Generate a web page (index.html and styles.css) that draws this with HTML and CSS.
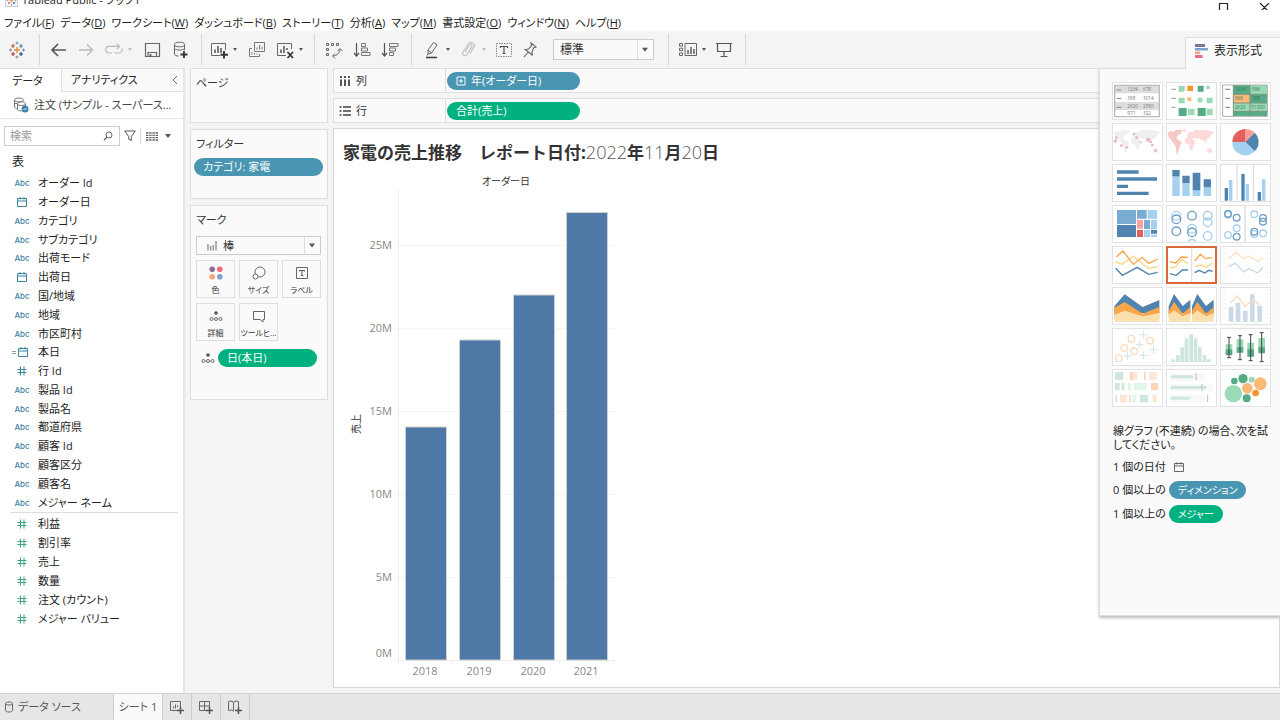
FILE: index.html
```html
<!DOCTYPE html>
<html lang="ja">
<head>
<meta charset="utf-8">
<title>Tableau Public - ブック1</title>
<link rel="stylesheet" href="styles.css">
</head>
<body>
<svg class="defs" aria-hidden="true">
  <symbol id="cal" viewBox="0 0 12 12"><path d="M1.500 2.500h9v8h-9zM1.500 5h9M4 1v2.500M8 1v2.500" fill="none" stroke="currentColor"/></symbol>
  <symbol id="hash" viewBox="0 0 12 12"><path d="M4.500 1.500v9M8 1.500v9M1.500 4.500h9M1.500 7.500h9" fill="none" stroke="currentColor"/></symbol>
  <symbol id="logo" viewBox="0 0 18 18"><path d="M9 6v6M6 9h6" stroke="#eb8a35" stroke-width="1.400"/><path d="M5 3v4M3 5h4" stroke="#c7504d" stroke-width="1.200"/><path d="M13 3v4M11 5h4" stroke="#5b879b" stroke-width="1.200"/><path d="M5 11v4M3 13h4" stroke="#c7353f" stroke-width="1.200"/><path d="M13 11v4M11 13h4" stroke="#1f447e" stroke-width="1.200"/><path d="M9 .5v3M7.500 2h3M9 14.500v3M7.500 16h3M1 9h3M2.500 7.500v3M14 9h3M15.500 7.500v3" stroke="#6f8fb3"/></symbol>
  <symbol id="detail" viewBox="0 0 14 12"><circle cx="7" cy="3" r="1.800" fill="#555"/><g fill="none" stroke="#666"><circle cx="2.500" cy="9" r="1.500"/><circle cx="7" cy="9" r="1.500"/><circle cx="11.500" cy="9" r="1.500"/></g></symbol>
</svg>

<header class="titlebar">
  <svg class="app-icon" viewBox="0 0 18 18"><use href="#logo"/></svg>
  <span class="app-title">Tableau Public - ブック1</span>
  <svg class="winctl" viewBox="0 0 60 12"><path d="M4.500 0.500h8v8h-8zM45 0l9 9M54 0l-9 9" fill="none" stroke="#222" stroke-width="1.200"/></svg>
</header>

<nav class="menubar">
  <button>ファイル(<u>F</u>)</button><button>データ(<u>D</u>)</button><button>ワークシート(<u>W</u>)</button><button>ダッシュボード(<u>B</u>)</button><button>ストーリー(<u>T</u>)</button><button>分析(<u>A</u>)</button><button>マップ(<u>M</u>)</button><button>書式設定(<u>O</u>)</button><button>ウィンドウ(<u>N</u>)</button><button>ヘルプ(<u>H</u>)</button>
</nav>

<div class="toolbar">
  <div class="group g-logo"><button class="ib" aria-label="スタート"><svg viewBox="0 0 18 18"><use href="#logo"/></svg></button></div>
  <div class="group g-nav">
    <button class="ib" aria-label="元に戻す"><svg viewBox="0 0 18 18"><path d="M17 9H3M9 3L3 9l6 6" fill="none" stroke="#555" stroke-width="1.600"/></svg></button>
    <button class="ib" aria-label="やり直し"><svg viewBox="0 0 18 18"><path d="M2 9h14M10 3.500L15.500 9 10 14.500" fill="none" stroke="#bbb" stroke-width="1.400"/></svg></button>
    <span class="split"><button class="ib" aria-label="再生"><svg viewBox="0 0 18 18"><path d="M7 12H4a3.300 3.300 0 010-6.600h10M12 3l2.500 2.400L12 8M9 12h5a3.300 3.300 0 003-4.500" fill="none" stroke="#bbb" stroke-width="1.200"/></svg></button><button class="caret off" aria-label="再生オプション"></button></span>
    <button class="ib" aria-label="保存"><svg viewBox="0 0 18 18"><path d="M2.500 2.500h14v13h-14zM5 15.500v-4h8.500v4" fill="none" stroke="#666" stroke-width="1.200"/><path d="M6.500 13h2v2.500h-2z" fill="#666"/></svg></button>
    <button class="ib" aria-label="新しいデータ ソース"><svg viewBox="0 0 18 18"><path d="M3.500 4v9c0 1.500 2 2 4 2M13.500 4v5" fill="none" stroke="#666"/><ellipse cx="8.500" cy="3.500" rx="5" ry="2.300" fill="none" stroke="#666"/><path d="M3.500 7.500c1 2 9 2 10 0" fill="none" stroke="#666"/><path d="M13 10v7M9.500 13.500h7" stroke="#333" stroke-width="1.800"/></svg></button>
  </div>
  <div class="group g-sheet">
    <span class="split"><button class="ib" aria-label="新しいワークシート"><svg viewBox="0 0 18 18"><path d="M10 14.500H1.500v-12h14V9" fill="none" stroke="#666"/><path d="M5 12V8.500M8 12V5M11 12V7" stroke="#555" stroke-width="1.500"/><path d="M14 10v7.500M10.500 13.700h7.500" stroke="#333" stroke-width="1.900"/></svg></button><button class="caret" aria-label="新規オプション"></button></span>
    <button class="ib" aria-label="複製"><svg viewBox="0 0 18 18"><path d="M6.500 1.500h10v9h-10zM4 7.500H1.500v8h10V13" fill="none" stroke="#777"/><path d="M9 8.500V6.500M11.500 8.500V4M14 8.500V5.500M4 13.500V11M6.500 13.500V12M9 13.500V12.500" stroke="#777"/></svg></button>
    <span class="split"><button class="ib" aria-label="クリア"><svg viewBox="0 0 18 18"><path d="M10 14.500H1.500v-12h14V8" fill="none" stroke="#666"/><path d="M5 12V8.500M8 12V5M11 9V7" stroke="#555" stroke-width="1.500"/><path d="M11.500 11l5.500 6M17 11l-5.500 6" stroke="#333" stroke-width="1.700"/></svg></button><button class="caret" aria-label="クリア オプション"></button></span>
  </div>
  <div class="group g-sort">
    <button class="ib" aria-label="行と列の交換"><svg viewBox="0 0 18 18"><path d="M1.500 2.500h2v2h-2zM6.500 2.500h2v2h-2zM11.500 2.500h2v2h-2zM1.500 7.500h2v2h-2zM1.500 12.500h2v2h-2zM15 8c0 4-3 6.500-7 7M15 7.500l-2.500 2.500M15 7.500l2.500 2.500M7.500 15l2.500-2.500M7.500 15l2.500 2.500" fill="none" stroke="#666"/></svg></button>
    <button class="ib" aria-label="昇順"><svg viewBox="0 0 18 18"><path d="M3.500 2v13M1 12l2.500 3L6 12" fill="none" stroke="#555" stroke-width="1.200"/><path d="M8.500 2.500h4v3h-4zM8.500 7h6v3h-6zM8.500 11.500h8.500v3H8.500z" fill="none" stroke="#777"/></svg></button>
    <button class="ib" aria-label="降順"><svg viewBox="0 0 18 18"><path d="M3.500 2v13M1 12l2.500 3L6 12" fill="none" stroke="#555" stroke-width="1.200"/><path d="M8.500 2.500H17v3H8.500zM8.500 7h6v3h-6zM8.500 11.500h4v3h-4z" fill="none" stroke="#777"/></svg></button>
  </div>
  <div class="group g-format">
    <span class="split"><button class="ib" aria-label="ハイライト"><svg viewBox="0 0 18 18"><path d="M5 9l5.500-7.500 3.500 2.500L8.500 12 5 13zM5 9l3.500 3M5 13l-1 1.500" fill="none" stroke="#666"/><path d="M3 16.500h11" stroke="#444" stroke-width="1.600"/></svg></button><button class="caret" aria-label="ハイライト オプション"></button></span>
    <span class="split"><button class="ib" aria-label="グループ"><svg viewBox="0 0 18 18"><path d="M6 11l4.500-6.500c1.500-2 3.500-.5 2.500 1.200L8 13.500c-1.800 2.500-5.500.5-4-2.500l5.500-8c2.500-3.500 7.500-.5 5.500 3L11 12.500" fill="none" stroke="#bbb" stroke-width="1.100"/></svg></button><button class="caret off" aria-label="グループ オプション"></button></span>
    <button class="ib" aria-label="マーク ラベル"><svg viewBox="0 0 18 18"><path d="M1.500 2.500h15v13h-15z" fill="none" stroke="#888" stroke-dasharray="1.500 1"/><path d="M5.500 7V5.500h7V7M9 5.500v7M7.500 12.500h3" fill="none" stroke="#555" stroke-width="1.200"/></svg></button>
    <button class="ib" aria-label="軸の固定"><svg viewBox="0 0 18 18"><path d="M10 2l5 4-2.200.8-1.800 4 .2 3.200-7-5.500 3.300-.5L10.500 4.500zM7 11.500L3 16" fill="none" stroke="#666" stroke-width="1.100"/></svg></button>
    <select class="fit" aria-label="ビューの調整"><option>標準</option></select>
  </div>
  <div class="group g-view">
    <span class="split"><button class="ib" aria-label="カードの表示"><svg viewBox="0 0 18 18"><path d="M.5 2.500h3v2.500h-3zM.5 7.200h3v2.500h-3zM.5 12h3v2.500h-3zM6 2.500h11.500v12H6z" fill="none" stroke="#666"/><path d="M9 13V9M12 13V6M15 13V8" stroke="#555" stroke-width="1.400"/></svg></button><button class="caret" aria-label="カード オプション"></button></span>
    <button class="ib" aria-label="プレゼンテーション"><svg viewBox="0 0 18 18"><path d="M1 2.500h16M2.500 2.500v8h13v-8M9 10.500V15M5.500 15.500h7" fill="none" stroke="#555" stroke-width="1.200"/></svg></button>
  </div>
  <button class="showme-tab"><svg viewBox="0 0 13 14"><path fill="#87709b" d="M0 0h10v3H0z"/><path fill="#7ba3cf" d="M0 4h13v2.500H0z"/><path fill="#f3a67d" d="M0 7.500h5V10H0z"/><path fill="#f06a7e" d="M0 11h7.500v3H0z"/></svg>表示形式</button>
</div>

<main class="work">
  <aside class="data-pane">
    <div class="pane-tabs"><button class="ptab active">データ</button><button class="ptab">アナリティクス<svg viewBox="0 0 6 10"><path d="M5 1L1 5l4 4" fill="none" stroke="#666"/></svg></button></div>
    <div class="source"><svg viewBox="0 0 16 16"><ellipse cx="6" cy="3" rx="4.500" ry="2" fill="none" stroke="#777"/><path d="M1.500 3v7c0 1 1.500 1.500 3 1.500M4.500 7c0-3 8-3 8 0v2M4.500 7v5c0 1.500 2 2 4 2M4.500 7c0 2 8 2 8 0M2 6.500h2" fill="none" stroke="#777"/><circle cx="12" cy="12" r="3.500" fill="#3b86a8"/><path d="M10.500 12l1 1 2-2" fill="none" stroke="#fff"/></svg><span>注文 (サンプル - スーパース…</span></div>
    <div class="search-row">
      <label class="search"><input type="text" placeholder="検索" aria-label="検索"><svg viewBox="0 0 10 10"><circle cx="6" cy="4" r="3" fill="none" stroke="#666"/><path d="M4 6L1 9" stroke="#666" stroke-width="1.200"/></svg></label>
      <button class="filter" aria-label="フィルター"><svg viewBox="0 0 12 12"><path d="M.7 1h10.600L7.300 6.500v4l-2.600-1.300V6.500z" fill="none" stroke="#555"/></svg></button>
      <button class="viewas" aria-label="表示方法"><svg viewBox="0 0 12 9"><path d="M0 1h12M0 3.300h12M0 5.600h12M0 8h12" stroke="#666" stroke-width="1.300" stroke-dasharray="2.400 .8"/></svg></button>
      <button class="caret" aria-label="オプション"></button>
    </div>
    <h2 class="table-head">表</h2>
    <ul class="fields dims">
      <li><i>Abc</i>オーダー Id</li>
      <li><i><svg><use href="#cal"/></svg></i>オーダー日</li>
      <li><i>Abc</i>カテゴリ</li>
      <li><i>Abc</i>サブカテゴリ</li>
      <li><i>Abc</i>出荷モード</li>
      <li><i><svg><use href="#cal"/></svg></i>出荷日</li>
      <li><i>Abc</i>国/地域</li>
      <li><i>Abc</i>地域</li>
      <li><i>Abc</i>市区町村</li>
      <li><i class="calc">=<svg><use href="#cal"/></svg></i>本日</li>
      <li><i><svg><use href="#hash"/></svg></i>行 Id</li>
      <li><i>Abc</i>製品 Id</li>
      <li><i>Abc</i>製品名</li>
      <li><i>Abc</i>都道府県</li>
      <li><i>Abc</i>顧客 Id</li>
      <li><i>Abc</i>顧客区分</li>
      <li><i>Abc</i>顧客名</li>
      <li><i>Abc</i><em>メジャー ネーム</em></li>
    </ul>
    <ul class="fields meas">
      <li><i><svg><use href="#hash"/></svg></i>利益</li>
      <li><i><svg><use href="#hash"/></svg></i>割引率</li>
      <li><i><svg><use href="#hash"/></svg></i>売上</li>
      <li><i><svg><use href="#hash"/></svg></i>数量</li>
      <li><i><svg><use href="#hash"/></svg></i><em>注文 (カウント)</em></li>
      <li><i><svg><use href="#hash"/></svg></i><em>メジャー バリュー</em></li>
    </ul>
  </aside>

  <section class="cards">
    <div class="card pages"><h3>ページ</h3></div>
    <div class="card filters"><h3>フィルター</h3><button class="pill blue">カテゴリ: 家電</button></div>
    <div class="card marks"><h3>マーク</h3>
      <label class="marktype"><svg viewBox="0 0 10 10"><path d="M1 9.500V3M3.700 9.500V5M6.300 9.500V4M9 9.500V0" stroke="#999" stroke-width="1.500"/></svg><select aria-label="マーク タイプ"><option>棒</option></select></label>
      <div class="mark-grid">
        <button><svg viewBox="0 0 14 14"><circle cx="3.200" cy="3.200" r="2.800" fill="#87709b"/><circle cx="10.800" cy="3.200" r="2.800" fill="#f4687f"/><circle cx="3.200" cy="10.800" r="2.800" fill="#f3a67d"/><circle cx="10.800" cy="10.800" r="2.800" fill="#7ba3cf"/></svg>色</button>
        <button><svg viewBox="0 0 14 14"><circle cx="8" cy="6" r="5" fill="none" stroke="#666"/><circle cx="3.500" cy="10.500" r="2.500" fill="#fafafa" stroke="#666"/></svg>サイズ</button>
        <button><svg viewBox="0 0 14 14"><path d="M1.500 1.500h11v11h-11z" fill="none" stroke="#666"/><path d="M4.500 5.500v-1h5v1M7 4.500v5M5.800 9.500h2.400" fill="none" stroke="#555"/></svg>ラベル</button>
        <button><svg viewBox="0 0 14 12"><use href="#detail"/></svg>詳細</button>
        <button><svg viewBox="0 0 14 14"><path d="M1.500 2.500h11v8H11v2.500L8 10.500H1.500z" fill="none" stroke="#666"/></svg>ツールヒ…</button>
      </div>
      <div class="mark-pill"><svg viewBox="0 0 14 12"><use href="#detail"/></svg><button class="pill green">日(本日)</button></div>
    </div>
  </section>

  <section class="canvas">
    <div class="shelf"><div class="shelf-name"><svg viewBox="0 0 12 12"><path d="M2 4.500V11M6 4.500V11M10 4.500V11M2 1v2M6 1v2M10 1v2" stroke="#444" stroke-width="1.800"/></svg>列</div><button class="pill blue"><svg viewBox="0 0 10 10"><path d="M1 1h8v8H1zM5 3v4M3 5h4" fill="none" stroke="#fff"/></svg>年(オーダー日)</button></div>
    <div class="shelf"><div class="shelf-name"><svg viewBox="0 0 12 12"><path d="M4 2h8M4 6h8M4 10h8M.5 2h2M.5 6h2M.5 10h2" stroke="#444" stroke-width="1.600"/></svg>行</div><button class="pill green">合計(売上)</button></div>
    <div class="sheet">
      <h1>家電の売上推移　レポート日付:<b>2022</b>年<b>11</b>月<b>20</b>日</h1>
      <svg class="chart" viewBox="0 0 280 510" role="img" aria-label="売上推移">
        <path d="M52 73.500h220M52 156.500h220M52 239.500h220M52 322.500h220M52 405.500h220" stroke="#f3f3f3"/>
        <path d="M55.500 18v474M52 488.500h220M109.500 488v4M163.500 488v4M216.500 488v4M270.500 488v4" stroke="#efefef" fill="none"/>
        <g fill="#4e79a7" stroke="#d0d0cc">
          <rect x="62.500" y="255" width="41" height="233"/><rect x="116.500" y="168" width="41" height="320"/><rect x="170.500" y="123" width="41" height="365"/><rect x="223.500" y="40.500" width="41" height="447.500"/>
        </g>
        <g class="ticks" text-anchor="end"><text x="49" y="77">25M</text><text x="49" y="160">20M</text><text x="49" y="243">15M</text><text x="49" y="326">10M</text><text x="49" y="409">5M</text><text x="49" y="485">0M</text></g>
        <g class="ticks" text-anchor="middle"><text x="82" y="503">2018</text><text x="136" y="503">2019</text><text x="190" y="503">2020</text><text x="243" y="503">2021</text></g>
        <text class="axis" x="163" y="13" text-anchor="middle">オーダー日</text>
        <text class="axis" transform="translate(17 252) rotate(-90)" text-anchor="middle">売上</text>
      </svg>
    </div>
  </section>

  <aside class="showme">
    <div class="thumbs">
      <button aria-label="テキスト表"><svg viewBox="0 0 150 114"><path fill="#ddd" d="M8 10h134v24H8zM8 60h134v24H8z"/><path d="M8 10h134v94H8z" fill="none" stroke="#bbb" stroke-width="4"/><path d="M14 24h14M14 49h14M14 76h14" stroke="#888" stroke-width="3"/><g class="tiny" fill="#777"><text x="46" y="28">1234</text><text x="93" y="28">678</text><text x="46" y="53">368</text><text x="93" y="53">3014</text><text x="46" y="77">2620</text><text x="93" y="77">2550</text><text x="46" y="98">971</text><text x="93" y="98">322</text></g></svg></button>
      <button aria-label="ヒート マップ"><svg viewBox="0 0 150 114"><path d="M16 22h14M16 49h14M16 76h12" stroke="#999" stroke-width="3"/><path fill="#9bdab6" d="M38 11h18v18H38zM121 11h10v10h-10zM38 47h18v17H38zM95 47h14v14H95zM122 47h18v17h-18zM66 80h20v20H66zM122 80h18v20h-18z"/><path fill="#55ab85" d="M95 11h18v18H95zM38 78h24v24H38zM95 78h24v24H95z"/><path fill="#f7942e" d="M64 11h17v16H64z"/><path fill="#fdb876" d="M64 46h12v11H64z"/></svg></button>
      <button aria-label="ハイライト表"><svg viewBox="0 0 150 114"><path fill="#55ab85" d="M40 9h50v28H40zM90 37h52v26H90zM40 88h102v14H40z"/><path fill="#9bdab6" d="M90 9h52v28H90zM40 63h102v25H40z"/><path fill="#fdb876" d="M40 37h50v26H40z"/><path d="M8 9h134v94H8z" fill="none" stroke="#a9b0ac" stroke-width="3"/><path d="M40 9v94M90 9v94M40 37h102M40 63h102M40 88h102" fill="none" stroke="#78907f" stroke-width="3"/><path d="M16 22h14M16 49h14M16 76h14" stroke="#777" stroke-width="3"/><g class="tiny" fill="#3c7459"><text x="44" y="28">1234</text><text x="96" y="28">586</text><text x="44" y="55">368</text><text x="96" y="55">388</text><text x="44" y="81">2620</text><text x="94" y="81">51000</text></g></svg></button>

      <button aria-label="記号マップ"><svg viewBox="0 0 150 114"><path fill="#f0f0f0" d="M5 30l8-6 10 2 8-6 24 2-6 10-10 4-6 10 10 6 10 8-6 12-6 18-4-2-2-18-8-10-4-8-10-8zM64 34l6-8 8 2 8-8 16 2 10-2 26 4 6 6-8 4-4 8-10 8-4 12-6-12-6 2-6-8-8 4-8-4-6 2 10 10-4 10-4 14-6 2-6-18-10-4-2-10 8-6zM122 80l8-6 6 4 4 10-6 2-10-3z"/><g fill="#e7a3a9" opacity=".8"><circle cx="10" cy="54" r="5"/><circle cx="13" cy="44" r="4"/><circle cx="28" cy="68" r="4"/><circle cx="45" cy="73" r="4"/><circle cx="65" cy="33" r="4"/><circle cx="74" cy="44" r="4"/><circle cx="86" cy="58" r="3"/><circle cx="108" cy="50" r="6"/><circle cx="116" cy="57" r="4"/><circle cx="121" cy="66" r="4"/><circle cx="131" cy="83" r="4"/></g></svg></button>
      <button aria-label="マップ"><svg viewBox="0 0 150 114"><path fill="#f6c9c7" d="M5 30l8-6 10 2 8-6 18 2-4 10-8 4-6 10 8 6 8 8-6 12-6 20-4-2-2-20-8-10-4-8-8-8zM50 20l10-2-5 9z"/><path fill="#fcdad9" d="M64 34l6-8 8 2 8-8 16 2 10-2 26 4 6 6-8 4-4 8-10 8-4 12-6-12-6 2-6-8-8 4-8-4-6 2 10 10-4 10-4 14-6 2-6-18-10-4-2-10 8-6zM122 80l8-6 6 4 4 10-6 2-10-3z"/></svg></button>
      <button aria-label="円グラフ"><svg viewBox="0 0 150 114"><path d="M76 57V18a39 39 0 0128 11z" fill="#ff9b98"/><path d="M76 57l28-28a39 39 0 010 56z" fill="#5084ae"/><path d="M76 57l28 28a39 39 0 01-67-28z" fill="#a6d0f0"/><path d="M76 57H37a39 39 0 0139-39z" fill="#e0625b"/></svg></button>

      <button aria-label="横棒"><svg viewBox="0 0 150 114"><path fill="#5084ae" d="M15 19h65v10H15zM15 40h120v10H15zM15 62h33v10H15zM15 83h95v10H15z"/></svg></button>
      <button aria-label="積み上げ棒"><svg viewBox="0 0 150 114"><path fill="#a6d0f0" d="M19 36h22v60H19zM49 56h22v40H49zM80 78h23v18H80zM113 70h22v26h-22z"/><path fill="#5084ae" d="M19 18h22v19H19zM49 35h22v22H49zM80 26h23v53H80zM113 46h22v24h-22z"/></svg></button>
      <button aria-label="並列棒"><svg viewBox="0 0 150 114"><path d="M51 0v110M100 0v110" stroke="#d4d4d4" stroke-width="3"/><path fill="#5084ae" d="M14 72h10v38H14zM64 30h10v80H64zM113 84h10v26h-10z"/><path fill="#a6d0f0" d="M27 48h10v62H27zM77 60h10v50H77zM126 46h10v64h-10z"/></svg></button>

      <button aria-label="ツリーマップ"><svg viewBox="0 0 150 114"><path fill="#7aacd2" d="M15 15h57v42H15zM75 15h29v26H75zM96 45h18v27H96z"/><path fill="#5084ae" d="M15 60h57v36H15zM117 75h18v11h-18z"/><path fill="#a6d0f0" d="M107 15h28v26h-28zM117 45h18v27h-18zM96 75h18v21H96zM117 89h18v7h-18z"/><path fill="#ffa09c" d="M75 45h18v26H75z"/><path fill="#e0625b" d="M75 75h18v21H75z"/></svg></button>
      <button aria-label="円ビュー"><svg viewBox="0 0 150 114"><g fill="none" stroke="#a6d0f0" stroke-width="4"><circle cx="31" cy="32" r="13"/><circle cx="125" cy="52" r="13"/><circle cx="78" cy="71" r="13"/><circle cx="125" cy="93" r="13"/><path d="M66 110a13 10 0 0124 0"/></g><g fill="none" stroke="#6e9dc4" stroke-width="4"><circle cx="31" cy="43" r="13"/><circle cx="78" cy="32" r="13"/><circle cx="31" cy="79" r="13"/><circle cx="78" cy="82" r="13"/><circle cx="125" cy="32" r="13" stroke="#a6c8e4"/></g></svg></button>
      <button aria-label="並列円"><svg viewBox="0 0 150 114"><path d="M75 0v114" stroke="#ccc" stroke-width="3"/><g fill="none" stroke="#a6d0f0" stroke-width="4"><circle cx="24" cy="29" r="10"/><circle cx="103" cy="28" r="10"/><circle cx="50" cy="70" r="10"/><circle cx="24" cy="90" r="10"/><circle cx="103" cy="87" r="10"/><circle cx="129" cy="85" r="10"/></g><g fill="none" stroke="#6e9dc4" stroke-width="4"><circle cx="24" cy="26" r="10"/><circle cx="50" cy="38" r="10"/><circle cx="129" cy="39" r="10"/><circle cx="129" cy="50" r="10"/><circle cx="103" cy="80" r="10"/><circle cx="50" cy="95" r="10"/></g></svg></button>

      <button aria-label="線 (連続)"><svg viewBox="0 0 150 114"><g fill="none" stroke-width="4"><path d="M11 48l20 7 32-25 46 37 28-5" stroke="#f7d488"/><path d="M13 33l20-18 31 40 26-21 20 18 27-13" stroke="#f9a64a"/><path d="M11 67l20 21 45-24 34 21 27-6" stroke="#5084ae"/></g></svg></button>
      <button class="selected" aria-label="線 (不連続)"><svg viewBox="0 0 150 114"><path d="M77 0v114" stroke="#ddd" stroke-width="4"/><g fill="none" stroke-width="4"><path d="M11 66l18-3 19-22 18 13M86 62l18-5 18 6 18-12" stroke="#f7d488"/><path d="M11 47l18 4 17-18 20 1M86 45l17-20 16 13 20-3" stroke="#f9a64a"/><path d="M11 83l20 5 18-16h17M86 80l14-7 16 8 12-8 12 3" stroke="#5084ae"/></g></svg></button>
      <button aria-label="二重線"><svg viewBox="0 0 150 114"><path d="M13 8v90M141 8v90" stroke="#e4e4e4" stroke-width="7" stroke-dasharray="2 12"/><g fill="none" stroke-width="4"><path d="M25 39l23-20 23 19 16-8 26 17 16-13" stroke="#fde0c6"/><path d="M25 61l21-9 25 26 15-10 27 13 16-18" stroke="#c9d9e6"/></g></svg></button>

      <button aria-label="面 (連続)"><svg viewBox="0 0 150 114"><path fill="#5084ae" d="M7 58l31-36 54 38 50-21v40H7z"/><path fill="#f9a64a" d="M7 62l31-17 54 35 50-20v35H7z"/><path fill="#f9dfae" d="M7 84l31-13 54 17 50-10v26H7z"/></svg></button>
      <button aria-label="面 (不連続)"><svg viewBox="0 0 150 114"><path fill="#5084ae" d="M8 58l16-37 26 36 23-19v40H8zM78 58l16-37 26 36 23-19v40H78z"/><path fill="#f9a64a" d="M8 72l16-28 26 36 23-20v30H8zM78 72l16-28 26 36 23-20v30H78z"/><path fill="#f9dfae" d="M8 84l16-14 26 18 23-10v26H8zM78 84l16-14 26 18 23-10v26H78z"/></svg></button>
      <button aria-label="二重組み合わせ"><svg viewBox="0 0 150 114"><path d="M13 8v94M141 8v94" stroke="#e4e4e4" stroke-width="7" stroke-dasharray="2 12"/><path fill="#ccd9e6" d="M26 59h14v45H26zM47 47h14v57H47zM69 71h14v33H69zM90 22h14v82H90zM112 57h14v47h-14z"/><path d="M30 49l22-22 23 31 24-20 21 17" fill="none" stroke="#fbdcc0" stroke-width="4"/></svg></button>

      <button aria-label="散布図"><svg viewBox="0 0 150 114"><g fill="none" stroke="#fddcbd" stroke-width="4"><circle cx="58" cy="32" r="10"/><circle cx="114" cy="38" r="10"/><circle cx="37" cy="60" r="10"/><circle cx="67" cy="70" r="10"/><circle cx="21" cy="91" r="10"/></g><path d="M94 8v24M82 20h24M83 38v24M71 50h24M124 53v24M112 65h24M46 72v24M34 84h24M94 70v24M82 82h24" stroke="#cee6dc" stroke-width="3"/></svg></button>
      <button aria-label="ヒストグラム"><svg viewBox="0 0 150 114"><path fill="#cee6dc" d="M16 94h11v8H16zM30 81h11v21H30zM43 58h11v44H43zM56 31h11v71H56zM70 19h11v83H70zM83 31h11v71H83zM96 58h11v44H96zM110 81h11v21h-11zM123 94h11v8h-11z"/></svg></button>
      <button aria-label="箱ひげ図"><svg viewBox="0 0 150 114"><path fill="#9bdab6" d="M17 49h20v15H17zM50 34h20v26H50zM82 44h20v22H82zM115 30h20v32h-20z"/><path fill="#55ab85" d="M17 64h20v18H17zM50 58h20v16H50zM82 64h20v22H82zM115 58h20v18h-20z"/><path d="M27 28v61M60 23v72M92 20v78M125 14v87M21 28h12M21 89h12M54 23h12M54 95h12M86 20h12M86 98h12M119 14h12M119 101h12" stroke="#444" stroke-width="3"/></svg></button>

      <button aria-label="ガント"><svg viewBox="0 0 150 114"><path fill="#cee6dc" d="M9 9h25v24H9zM29 42h8v22h-8zM9 42h14v22H9zM10 78h5v22h-5zM84 78h24v22H84z"/><path fill="#fad7bb" d="M53 9h11v24H53zM96 9h5v24h-5zM117 42h22v22h-22zM51 78h5v22h-5z"/><path fill="#e3f4eb" d="M66 42h38v22H66zM48 42h10v22H48zM61 78h12v22H61z"/><path fill="#fce7d5" d="M65 9h11v24H65zM112 9h22v24h-22zM24 78h21v22H24zM122 78h12v22h-12z"/></svg></button>
      <button aria-label="ブレット グラフ"><svg viewBox="0 0 150 114"><path fill="#f8f8f8" d="M14 13h102v22H14zM14 45h126v22H14zM14 78h102v22H14z"/><path fill="#cee6dc" d="M14 19h67v9H14zM14 51h107v9H14zM14 83h57v9H14z"/><path d="M90 13v21M108 45v21M125 78v21" stroke="#bbb" stroke-width="3"/></svg></button>
      <button aria-label="パック バブル"><svg viewBox="0 0 150 114"><g fill="#55ab85"><circle cx="43" cy="36" r="10"/><circle cx="69" cy="29" r="14"/><circle cx="80" cy="88" r="12"/></g><g fill="#9bdab6"><circle cx="40" cy="74" r="26"/><circle cx="95" cy="32" r="9"/></g><g fill="#fdb876"><circle cx="121" cy="44" r="19"/><circle cx="82" cy="58" r="16"/></g><circle cx="107" cy="72" r="10" fill="#f7942e"/></svg></button>
    </div>
    <div class="hint">
      <p>線グラフ (不連続) の場合、次を試してください。</p>
      <div class="need"><span>1 個の日付</span><svg viewBox="0 0 12 12"><use href="#cal"/></svg></div>
      <div class="need"><span>0 個以上の</span><span class="tag blue">ディメンション</span></div>
      <div class="need"><span>1 個以上の</span><span class="tag green">メジャー</span></div>
    </div>
  </aside>
</main>

<footer class="sheetbar">
  <button class="src"><svg viewBox="0 0 10 12"><path d="M1.500 2.500v7c0 2 7 2 7 0v-7c0-2-7-2-7 0c0 2 7 2 7 0" fill="none" stroke="#666"/></svg>データ ソース</button>
  <button class="current">シート 1</button>
  <button class="add" aria-label="新しいワークシート"><svg viewBox="0 0 16 16"><path d="M8 11.500H1.500v-9h10V8" fill="none" stroke="#666"/><path d="M4.500 9.500V7.500M6.500 9.500V5.500M8.500 8V6.500" stroke="#666"/><path d="M11.500 8v7M8 11.500h7" stroke="#555" stroke-width="1.500"/></svg></button>
  <button class="add" aria-label="新しいダッシュボード"><svg viewBox="0 0 16 16"><path d="M8 11.500H1.500v-9h10V8M6.500 2.500v9M1.500 7h10" fill="none" stroke="#666"/><path d="M11.500 8v7M8 11.500h7" stroke="#555" stroke-width="1.500"/></svg></button>
  <button class="add" aria-label="新しいストーリー"><svg viewBox="0 0 16 16"><path d="M7 12.500l-2-1.500-3.500.5v-9L5 2l1.500 2L8 2l3.500.5V8M6.500 4v7.500" fill="none" stroke="#666"/><path d="M11.500 8v7M8 11.500h7" stroke="#555" stroke-width="1.500"/></svg></button>
</footer>
</body>
</html>
```
FILE: styles.css
```css
* { box-sizing: border-box; }
body {
  margin: 0;
  height: 100vh;
  display: flex;
  flex-direction: column;
  overflow: hidden;
  background: #fff;
  color: #333;
  font: 12px/16px "Open Sans", "Noto Sans CJK JP", sans-serif;
  font-feature-settings: "palt";
}
button, select, input { font: inherit; font-feature-settings: inherit; color: inherit; }
button { border: 0; padding: 0; background: none; white-space: nowrap; }
h1, h2, h3, p, ul { margin: 0; padding: 0; }
.defs { position: absolute; width: 0; height: 0; }

.titlebar { display: flex; align-items: flex-end; height: 10px; padding-left: 5px; overflow: hidden; flex: none; }
.app-icon { width: 13px; height: 13px; margin: 0 4px 3px 0; border: 1px solid #ccc; }
.app-title { font-size: 11px; line-height: 20px; color: #222; }
.winctl { width: 60px; height: 12px; margin: 0 5px -5px auto; }

.menubar { display: flex; gap: 6px; align-items: center; height: 21px; padding: 4px 4px 0; font-size: 11px; color: #222; flex: none; }

.toolbar { display: flex; align-items: center; height: 37px; background: #f4f4f4; flex: none; }
.group { display: flex; align-items: center; height: 31px; border-right: 1px solid #d6d6d6; gap: 10px; }
.g-logo { padding: 0 13px 0 8px; }
.g-nav { padding: 0 12px 0 9px; }
.g-sheet { padding: 0 10px 0 8px; }
.g-sort { padding: 0 12px 0 10px; }
.g-format { padding: 0 14px 0 11px; gap: 8px; }
.g-view { padding: 0 12px 0 10px; gap: 8px; }
.ib, .ib svg { width: 18px; height: 18px; display: block; }
.split { display: flex; align-items: center; gap: 4px; }
.caret { width: 6px; height: 16px; display: grid; place-items: center; }
.caret::after { content: ""; border: 2px solid transparent; border-top: 3px solid #555; border-bottom: 0; }
.caret.off::after { border-top-color: #bbb; }
.search-row .caret::after { border-width: 4px 3px 0; }
select {
  appearance: none;
  border: 1px solid #ccc;
  border-radius: 0;
  background: url("data:image/svg+xml,%3Csvg xmlns='http://www.w3.org/2000/svg' width='16' height='20'%3E%3Cpath d='M.5 0v20' stroke='%23ddd'/%3E%3Cpath d='M5 8h6l-3 4z' fill='%23555'/%3E%3C/svg%3E") right center no-repeat #fafafa;
}
.fit { width: 101px; height: 21px; margin-left: 6px; padding: 0 6px; }
.showme-tab {
  display: flex; align-items: center; gap: 6px;
  align-self: flex-end; height: 32px; margin: 0 0 -1px auto; padding: 0 18px 5px 9px;
  border: 1px solid #ddd; border-width: 1px 0 0 1px; background: #fafafa; color: #222;
  position: relative; z-index: 2;
}
.showme-tab svg { width: 13px; height: 14px; }

.work { position: relative; display: flex; flex: 1; min-height: 0; background: #f4f4f4; }
.data-pane { width: 185px; flex: none; background: #fff; border-right: 2px solid #e6e6e6; color: #222; border-top: 1px solid #ddd; }
.pane-tabs { display: flex; height: 23px; }
.ptab { flex: 1; padding: 0 9px; border: 1px solid #ddd; border-width: 0 0 1px 1px; background: #fafafa; display: flex; align-items: center; justify-content: space-between; font-size: 11px; }
.ptab.active { flex: none; width: 61px; border: 0; background: #fff; padding-left: 12px; }
.ptab svg { width: 6px; height: 10px; margin-right: -4px; }
.source { display: flex; align-items: center; gap: 5px; height: 27px; padding-left: 13px; border-bottom: 1px solid #e4e4e4; font-size: 11px; color: #444; white-space: nowrap; }
.source svg { width: 16px; height: 16px; flex: none; }
.search-row { display: flex; align-items: center; height: 34px; padding: 0 0 0 4px; }
.search { display: flex; align-items: center; width: 116px; height: 20px; border: 1px solid #ccc; padding: 0 6px 0 5px; }
.search input { width: 0; flex: 1; border: 0; padding: 0; background: none; font-size: 11px; outline: 0; }
.search input::placeholder { color: #999; }
.search svg { width: 10px; height: 10px; }
.filter { margin-left: 4px; width: 17px; height: 16px; border-right: 1px solid #ddd; }
.filter svg { width: 12px; height: 12px; display: block; }
.viewas { margin: 0 7px 0 5px; }
.viewas svg { display: block; width: 12px; height: 9px; }
.table-head { font-size: 12px; line-height: 16px; font-weight: 400; padding: 1px 0 4px 12px; }
.fields { list-style: none; display: grid; grid-auto-rows: 1fr; font-size: 11px; }
.fields li { display: grid; grid-template-columns: 38px 1fr; align-items: center; white-space: nowrap; }
.fields i { font: 500 8px/10px Inter, sans-serif; justify-self: center; padding-left: 6px; color: #3d83a0; display: flex; align-items: center; }
.fields em { font-style: normal; }
.fields svg { width: 12px; height: 12px; display: block; }
.fields .calc { padding-left: 2px; }
.dims { height: 338px; }
.meas { height: 116px; padding-top: 1px; border-top: 1px solid #ddd; margin: 0 5px 0 10px; }
.meas li { margin-left: -10px; }
.meas i { color: #3fa57c; }

.cards { width: 142px; flex: none; padding-left: 5px; display: flex; flex-direction: column; gap: 6px; }
.card { width: 138px; background: #fafafa; border: 1px solid #ddd; padding: 6px 5px; }
.card h3 { font-size: 11px; line-height: 16px; font-weight: 400; }
.pages { height: 55px; }
.filters { height: 70px; }
.filters h3 { margin-bottom: 6px; }
.marks { height: 195px; }
.pill { display: flex; align-items: center; gap: 5px; height: 18px; border-radius: 9px; padding: 0 9px; color: #fff; font-size: 11px; }
.blue { background: #4996b2; }
.green { background: #00b180; }
.filters .pill { width: 129px; margin-left: -2px; }
.marktype { display: grid; align-items: center; margin: 8px 0 5px; }
.marktype > * { grid-area: 1 / 1; }
.marktype svg { width: 10px; height: 10px; margin-left: 11px; z-index: 1; }
.marktype select { height: 19px; width: 125px; padding: 0 26px; font-size: 11px; line-height: 16px; }
.mark-grid { display: grid; grid-template-columns: repeat(3, 39px); gap: 5px 4px; }
.mark-grid button { height: 38px; border: 1px solid #ddd; display: flex; flex-direction: column; align-items: center; justify-content: space-between; padding: 5px 0 0; font-size: 8px; line-height: 14px; }
.mark-grid svg { width: 14px; height: 14px; }
.mark-pill { display: flex; align-items: center; gap: 3px; margin: 8px 0 0 5px; }
.mark-pill svg { width: 14px; height: 12px; }
.mark-pill .pill { width: 99px; }

.canvas { flex: 1; min-width: 0; display: flex; flex-direction: column; gap: 5px; padding: 0 0 5px 6px; }
.shelf { display: flex; align-items: center; height: 25px; flex: none; background: #fafafa; border: 1px solid #ddd; border-right: 0; }
.shelf-name { display: flex; align-items: center; gap: 5px; width: 112px; height: 23px; padding-left: 5px; border-right: 1px solid #ddd; font-size: 11px; }
.shelf-name svg { width: 12px; height: 12px; }
.shelf .pill { width: 133px; margin-left: 1px; }
.shelf .pill svg { width: 10px; height: 10px; }
.sheet { flex: 1; min-height: 0; background: #fff; border: 1px solid #d8d8d8; padding: 10px 9px 0; overflow: hidden; }
.sheet h1 { font-size: 17px; line-height: 26px; font-weight: 700; font-feature-settings: normal; white-space: nowrap; }
.sheet h1 b { font-weight: 300; color: #555; font-size: 18px; }
.chart { display: block; width: 280px; height: 510px; margin-top: 6px; }
.ticks { font-size: 11px; fill: #888; }
.axis { font-size: 10px; fill: #333; }
.tiny { font-size: 14px; }

.showme { position: absolute; right: 0; top: 0; width: 181px; height: 548px; background: #fafafa; border: 1px solid #ddd; border-right: 0; box-shadow: 0 2px 3px #bbb; padding: 13px 10px 0 12px; color: #222; }
.thumbs { display: grid; grid-template-columns: repeat(3, 51px); gap: 3px; }
.thumbs button { height: 38px; background: #fff; border: 1px solid #e2e2e2; overflow: hidden; }
.thumbs svg { width: 50px; height: 38px; display: block; margin: -1px; }
.thumbs .selected { border: 2px solid #d9683a; }
.thumbs .selected svg { margin: -2px; }
.hint { padding: 17px 0 0 1px; font-size: 11px; line-height: 14px; }
.need { display: flex; align-items: center; gap: 3px; height: 18px; margin-top: 6px; }
.hint p + .need { height: 16px; margin-top: 7px; }
.need svg { width: 12px; height: 12px; margin-left: 4px; color: #666; }
.tag { height: 18px; line-height: 18px; padding: 0 9px; border-radius: 9px; color: #fff; font-size: 10px; }

.sheetbar { display: flex; height: 27px; flex: none; background: #e6e6e6; border-top: 1px solid #d2d2d2; color: #555; font-size: 11px; }
.sheetbar button { border-right: 1px solid #ccc; height: 100%; }
.sheetbar .src { display: flex; align-items: center; gap: 4px; width: 114px; padding-left: 4px; }
.src svg { width: 10px; height: 12px; }
.sheetbar .current { width: 49px; background: #fafafa; }
.sheetbar .add { width: 29px; display: grid; place-items: center; }
.add svg { width: 16px; height: 16px; }
```
